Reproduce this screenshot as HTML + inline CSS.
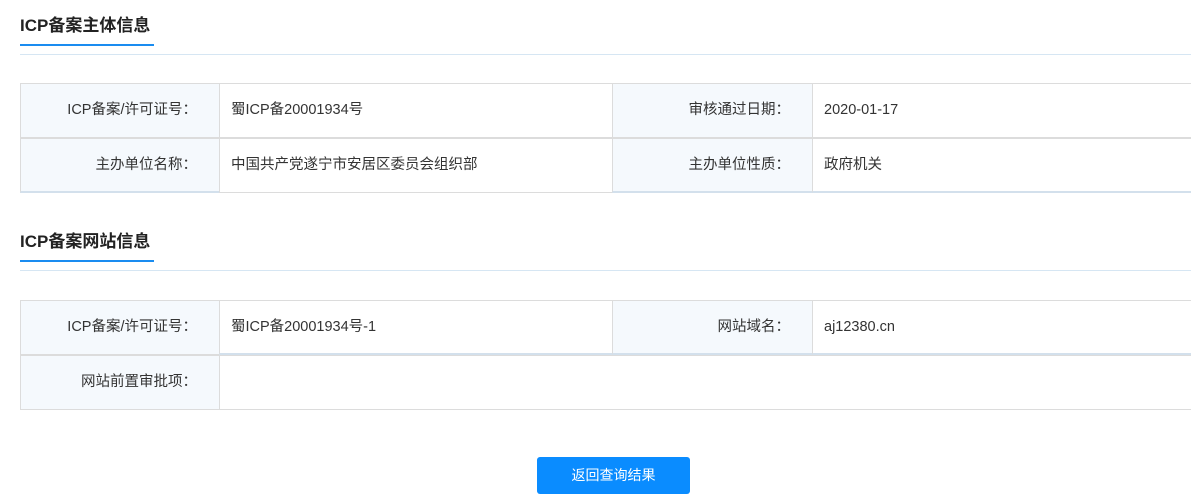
<!DOCTYPE html>
<html><head><meta charset="utf-8"><style>
*{margin:0;padding:0;box-sizing:border-box}
body{width:1191px;height:501px;background:#fff;position:relative;overflow:hidden;font-family:"Liberation Sans","Noto Sans CJK SC",sans-serif;color:#333}
.t{position:absolute;left:20px;font-size:17px;font-weight:bold;color:#222;line-height:20px}
.u{position:absolute;left:20px;width:134px;height:2px;background:#1a8cf0}
.l{position:absolute;left:20px;right:0;height:1px;background:#d6e6f3}
.c{position:absolute;height:55px;border:1px solid #dcdcdc;font-size:14.5px;line-height:53px;color:#333}
.k{background:#f5f9fd;text-align:right;padding-right:22px}
.v{padding-left:11px;background:#fff}
.bb{border-bottom:2px solid #d3e0ec}
.btn{position:absolute;left:537px;top:457px;width:153px;height:37px;background:#0a8cff;border-radius:3px;color:#fff;font-size:14px;text-align:center;line-height:37px}
</style></head><body>
<div class="t" style="top:16px">ICP备案主体信息</div>
<div class="u" style="top:44px"></div>
<div class="l" style="top:54px"></div>

<div class="c k" style="left:20px;top:83px;width:200px">ICP备案/许可证号：</div>
<div class="c v" style="left:219px;top:83px;width:394px">蜀ICP备20001934号</div>
<div class="c k" style="left:612px;top:83px;width:201px">审核通过日期：</div>
<div class="c v" style="left:812px;top:83px;width:390px">2020-01-17</div>
<div class="c k bb" style="left:20px;top:138px;width:200px">主办单位名称：</div>
<div class="c v" style="left:219px;top:138px;width:394px">中国共产党遂宁市安居区委员会组织部</div>
<div class="c k bb" style="left:612px;top:138px;width:201px">主办单位性质：</div>
<div class="c v bb" style="left:812px;top:138px;width:390px">政府机关</div>

<div class="t" style="top:232px">ICP备案网站信息</div>
<div class="u" style="top:260px"></div>
<div class="l" style="top:270px"></div>

<div class="c k" style="left:20px;top:300px;width:200px">ICP备案/许可证号：</div>
<div class="c v bb" style="left:219px;top:300px;width:394px">蜀ICP备20001934号-1</div>
<div class="c k bb" style="left:612px;top:300px;width:201px">网站域名：</div>
<div class="c v bb" style="left:812px;top:300px;width:390px">aj12380.cn</div>
<div class="c k" style="left:20px;top:355px;width:200px">网站前置审批项：</div>
<div class="c v" style="left:219px;top:355px;width:983px;border-left:1px solid #dcdcdc"></div>

<div class="btn">返回查询结果</div>
</body></html>
